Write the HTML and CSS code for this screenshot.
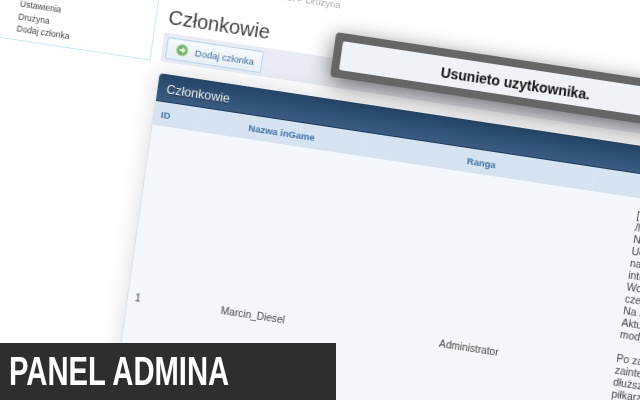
FILE: index.html
```html
<!DOCTYPE html>
<html lang="pl">
<head>
    <meta charset="UTF-8">
    <title>Panel admina</title>
    <link rel="stylesheet" href="styles.css">
</head>
<body>
    <div class="page">
        <div class="sidebar">
            <a>Ustawienia</a>
            <a>Drużyna</a>
            <a>Dodaj członka</a>
        </div>
        <div class="main">
            <div class="crumbs">Panel &gt; Drużyna</div>
            <h1>Członkowie</h1>
            <div class="toolbar">
                <a class="btn">
                    <svg class="btn-icon" viewBox="0 0 12 12">
                        <circle cx="6" cy="6" r="5.5" fill="#6cb35f" stroke="#a9d39f"/>
                        <path d="M3 6h4M6 3.5L8.5 6L6 8.5" fill="none" stroke="#e8f5e4" stroke-width="1.8"/>
                    </svg>
                    Dodaj członka
                </a>
            </div>
            <div class="card">
                <div class="card-title">Członkowie</div>
                <table>
                    <tr>
                        <th class="col-id">ID</th>
                        <th class="col-name">Nazwa inGame</th>
                        <th class="col-rank">Ranga</th>
                        <th class="col-info">Opis</th>
                    </tr>
                    <tr>
                        <td class="col-id">1</td>
                        <td class="col-name">Marcin_Diesel</td>
                        <td class="col-rank">Administrator</td>
                        <td class="col-info">
                            [<br>/l<br>Na<br>Uc<br>na<br>inte<br>Wc<br>cze<br>Na s<br>Aktu<br>mody<br><br>Po za<br>zainte<br>dłuższ<br>piłkarzy
                        </td>
                    </tr>
                </table>
            </div>
        </div>
        <div class="toast"><div class="toast-inner">Usunieto uzytkownika.</div></div>
    </div>
    <div class="banner"><span class="banner-text">PANEL ADMINA</span></div>
</body>
</html>
```

FILE: styles.css
```css
html, body {
    margin: 0;
    height: 100%;
    overflow: hidden;
    background-color: #fff;
}

body {
    position: relative;
    width: 640px;
    height: 400px;
    font-family: "Liberation Sans", Arial, sans-serif;
    color: #444;
}

.page {
    position: absolute;
    left: 0;
    top: 0;
    width: 900px;
    height: 520px;
    display: flex;
    gap: 10px;
    transform-origin: 0 0;
    transform: matrix(.989, .1495, -.14, .99, -23.6, -65.8);
    filter: blur(.3px);
}

.sidebar {
    box-sizing: border-box;
    width: 190px;
    height: 99px;
    padding: 56px 0 0 53px;
    border-right: 1px solid #c4e9fa;
    border-bottom: 1px solid #c4e9fa;
    display: flex;
    flex-direction: column;
    font-size: 8.5px;
    line-height: 12.5px;
    color: #444;
}

.main {
    width: 700px;
}

.crumbs {
    height: 17px;
    padding: 10px 0 0 100px;
    box-sizing: border-box;
    font-size: 9.5px;
    line-height: 11px;
    color: #aaa;
}

h1 {
    margin: 0;
    height: 52px;
    padding: 24px 0 0 2px;
    box-sizing: border-box;
    font-size: 20px;
    line-height: 24px;
    font-weight: normal;
    color: #444;
}

.toolbar {
    box-sizing: border-box;
    height: 29px;
    margin-bottom: 12px;
    padding: 4px;
    background-color: #e9ecf4;
}

.btn {
    box-sizing: border-box;
    display: inline-flex;
    align-items: center;
    gap: 7px;
    width: 97px;
    height: 22px;
    padding-left: 9px;
    border: 1px solid #b5d3ee;
    border-radius: 2px;
    background: linear-gradient(#f7fafc, #e6eff6);
    font-size: 9.5px;
    color: #3b6ea5;
}

.btn-icon {
    width: 12px;
    height: 12px;
}

.card {
    background-color: #f4f8fc;
    border-left: 1px solid #d3e4f0;
    box-shadow: 0 0 22px rgba(0, 0, 0, .14);
    border-radius: 5px 5px 0 0;
}

.card-title {
    height: 28px;
    padding-left: 9px;
    border-radius: 4px 4px 0 0;
    border-bottom: 1px solid #1d3a5a;
    box-sizing: border-box;
    background: linear-gradient(#234567, #3a5c82);
    font-size: 12.5px;
    line-height: 30px;
    color: #f0f4f8;
    text-shadow: 0 1px 1px rgba(0, 0, 0, .5);
}

table {
    width: 100%;
    table-layout: fixed;
    border-collapse: collapse;
}

th {
    height: 24px;
    padding: 0;
    background-color: #d6e3f0;
    font-size: 9.5px;
    color: #3d72a8;
}

td {
    height: 336px;
    padding: 0;
    text-align: center;
    font-size: 10.2px;
    line-height: 12px;
}

.col-id {
    width: 46px;
    text-align: left;
    padding-left: 7px;
    box-sizing: border-box;
}

.col-name {
    width: 166px;
    box-sizing: border-box;
}

td.col-name {
    padding-right: 6px;
}

.col-rank {
    width: 232px;
    box-sizing: border-box;
}

th.col-rank {
    padding-left: 6px;
}

td.col-rank {
    padding-left: 33px;
}

.col-info {
    text-align: left;
    padding-left: 48px;
}

td.col-info {
    vertical-align: top;
    padding-top: 11px;
    font-size: 10.5px;
}

.toast {
    position: absolute;
    left: 370px;
    top: 43px;
    width: 369px;
    height: 45px;
    box-sizing: border-box;
    padding: 8px;
    border-radius: 4px;
    background-color: #666;
    box-shadow: 0 6px 22px rgba(0, 0, 0, .55);
}

.toast-inner {
    height: 100%;
    border-radius: 2px;
    background-color: #eff3f8;
    text-align: center;
    font-size: 14px;
    font-weight: bold;
    line-height: 33px;
    color: #111;
}

.banner {
    position: absolute;
    left: 0;
    top: 343px;
    width: 336px;
    height: 57px;
    padding-left: 9px;
    box-sizing: border-box;
    background-color: #2e2e2e;
    font-size: 40px;
    font-weight: bold;
    line-height: 57px;
    color: #fff;
}

.banner-text {
    display: inline-block;
    transform: scaleX(.73);
    transform-origin: 0 50%;
    white-space: nowrap;
}
```
